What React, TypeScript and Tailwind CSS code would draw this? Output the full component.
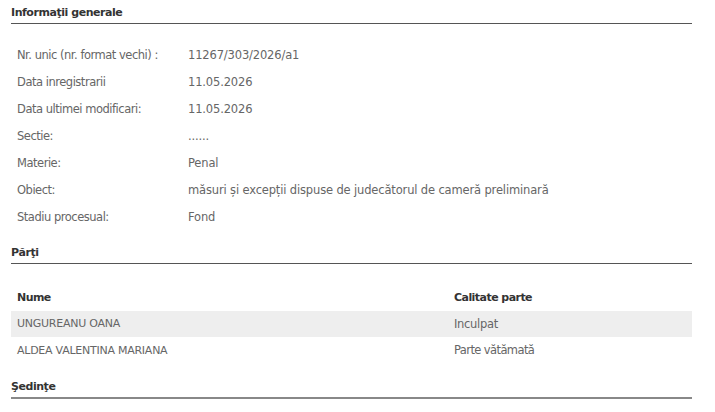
export default function App() {
  const rows: [string, string][] = [
    ["Nr. unic (nr. format vechi) :", "11267/303/2026/a1"],
    ["Data inregistrarii", "11.05.2026"],
    ["Data ultimei modificari:", "11.05.2026"],
    ["Sectie:", "......"],
    ["Materie:", "Penal"],
    ["Obiect:", "măsuri și excepții dispuse de judecătorul de cameră preliminară"],
    ["Stadiu procesual:", "Fond"],
  ];
  const font = { fontFamily: '"DejaVu Sans", Tahoma, sans-serif' };
  return (
    <div className="w-[715px] h-[412px] bg-white overflow-hidden pl-[11px] pr-[23px] pt-[5px]" style={font}>
      <div className="border-b border-[#555] pb-[3px] text-[11px] font-bold text-[#333] leading-[15px] tracking-[-0.45px]">Informaţii generale</div>
      <div className="pt-[18px] pl-[6px]">
        {rows.map(([l, v]) => (
          <div key={l} className="flex h-[27px] leading-[27px] text-[#666]">
            <div className="w-[171px] text-[11.5px] tracking-[-0.48px]">{l}</div>
            <div className="text-[11.5px] tracking-[-0.15px]">{v}</div>
          </div>
        ))}
      </div>
      <div className="mt-[14px] border-b border-[#555] pb-[3px] text-[11px] font-bold text-[#333] leading-[15px] tracking-[-0.45px]">Părţi</div>
      <div className="pt-[20px]">
        <div className="flex h-[27px] leading-[27px] text-[11px] font-bold text-[#333] tracking-[-0.55px]">
          <div className="w-[443px] pl-[6px]">Nume</div>
          <div>Calitate parte</div>
        </div>
        <div className="flex h-[26px] leading-[26px] bg-[#eeeeee] text-[#666]">
          <div className="w-[443px] pl-[6px] text-[11px] tracking-[-0.25px]">UNGUREANU OANA</div>
          <div className="text-[11.5px] tracking-[-0.3px]">Inculpat</div>
        </div>
        <div className="flex h-[27px] leading-[27px] text-[#666]">
          <div className="w-[443px] pl-[6px] text-[11px] tracking-[-0.25px]">ALDEA VALENTINA MARIANA</div>
          <div className="text-[11.5px] tracking-[-0.6px]">Parte vătămată</div>
        </div>
      </div>
      <div className="mt-[15px] border-b-2 border-[#888] pb-[3px] text-[11px] font-bold text-[#333] leading-[15px] tracking-[-0.45px]">Şedinţe</div>
    </div>
  );
}
